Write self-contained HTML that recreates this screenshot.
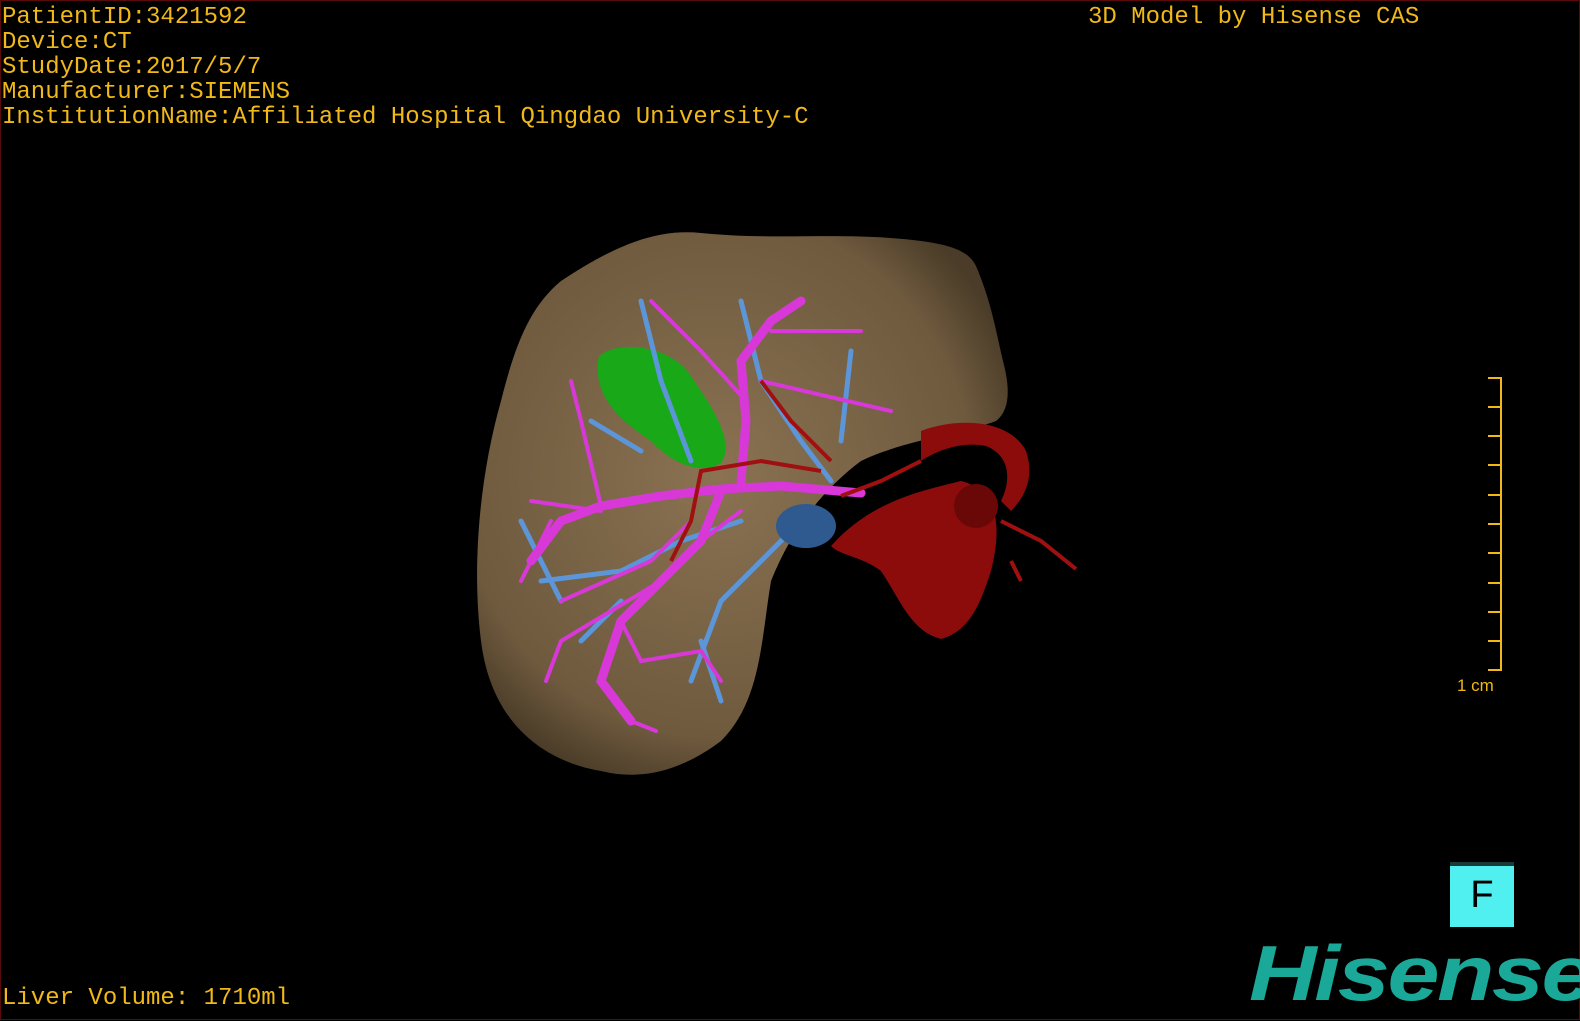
<!DOCTYPE html>
<html><head><meta charset="utf-8"><style>
html,body{margin:0;padding:0;background:#000;}
body{width:1580px;height:1020px;position:relative;overflow:hidden;border:1px solid #5a0a0a;box-sizing:border-box;}
.t{position:absolute;color:#f0b818;font-family:"Liberation Mono",monospace;font-size:24px;line-height:25px;white-space:pre;letter-spacing:0px;}
</style></head><body>
<div class="t" style="left:1px;top:4px">PatientID:3421592
Device:CT
StudyDate:2017/5/7
Manufacturer:SIEMENS
InstitutionName:Affiliated Hospital Qingdao University-C</div>
<div class="t" style="left:1087px;top:4px">3D Model by Hisense CAS</div>
<div class="t" style="left:1px;top:985px">Liver Volume: 1710ml</div>
<svg width="1580" height="1020" style="position:absolute;left:0;top:0">
<defs><radialGradient id="lv" cx="0.45" cy="0.45" r="0.6"><stop offset="0" stop-color="#8a7252"/><stop offset="0.8" stop-color="#6f5a3e"/><stop offset="1" stop-color="#4a3c28"/></radialGradient></defs>
<path d="M560,280 C620,240 660,228 700,232 C780,240 840,230 920,240 C960,245 970,255 975,265 C990,300 995,330 1002,360 C1010,390 1008,410 995,420 C970,430 900,440 860,460 C820,490 790,530 770,580 C760,640 760,700 720,740 C680,770 640,780 600,770 C540,760 490,720 480,640 C470,560 480,470 500,400 C515,340 530,305 560,280 Z" fill="url(#lv)"/>
<path d="M598,355 C620,338 670,345 690,375 C710,405 735,440 720,462 C700,475 670,462 650,440 C620,420 590,395 598,355 Z" fill="#18a818"/>
<g stroke="#5c95d8" stroke-width="5" fill="none" stroke-linecap="round">
<path d="M790,530 L760,560 L720,600 L690,680 M740,300 L760,380 L800,440 L830,480 M640,300 L660,380 L690,460 M540,580 L620,570 L680,540 L740,520 M580,640 L620,600 M700,640 L720,700 M850,350 L840,440 M590,420 L640,450 M520,520 L560,600"/>
</g>
<ellipse cx="805" cy="525" rx="30" ry="22" fill="#2e5a90"/>
<g stroke="#d838d8" stroke-width="9" fill="none" stroke-linecap="round">
<path d="M860,492 L780,485 L720,488 L660,495 L600,505 L560,520 L530,560"/>
<path d="M720,490 L700,540 L660,580 L620,620 L600,680 L630,720"/>
<path d="M740,480 L745,420 L740,360 L770,320 L800,300"/>
</g>
<g stroke="#d838d8" stroke-width="4" fill="none" stroke-linecap="round">
<path d="M745,400 L700,350 L650,300 M770,330 L860,330 M760,380 L890,410 M600,505 L580,420 L570,380 M660,580 L560,640 L545,680 M620,620 L640,660 L700,650 L720,680 M690,520 L650,560 L560,600 M600,510 L530,500 M700,540 L740,510 M630,720 L655,730 M550,520 L520,580"/>
</g>
<g fill="#8c0c0c">
<path d="M830,545 C870,500 920,490 960,480 C1000,490 1000,530 990,570 C980,600 970,630 940,638 C910,630 900,600 880,570 C860,555 840,555 830,545 Z"/>
<circle cx="975" cy="505" r="22" fill="#6a0808"/>
<path d="M920,430 C960,415 1010,420 1025,450 C1035,480 1020,500 1010,510 L1000,500 C1010,480 1010,455 985,445 C960,440 935,450 920,460 Z"/>
</g>
<g stroke="#a01010" stroke-width="4" fill="none">
<path d="M840,495 L880,480 L920,460 M830,460 L790,420 L760,380 M820,470 L760,460 L700,470 L690,520 L670,560 M1000,520 L1040,540 L1075,568 M1010,560 L1020,580"/>
</g>
<g stroke="#f0b818" stroke-width="2" fill="none">
<path d="M1487,377 H1500 V669 H1487 M1487,406 H1500 M1487,435 H1500 M1487,464 H1500 M1487,494 H1500 M1487,523 H1500 M1487,552 H1500 M1487,582 H1500 M1487,611 H1500 M1487,640 H1500"/>
</g>
<text x="1456" y="690" fill="#f0b818" font-family="Liberation Sans,sans-serif" font-size="17">1 cm</text>
</svg>
<div style="position:absolute;left:1449px;top:861px;width:64px;height:65px;background:#50f0f0;border-top:4px solid #1a3a3a;box-sizing:border-box;color:#000;font:38px 'Liberation Sans',sans-serif;text-align:center;line-height:58px;">F</div>
<div style="position:absolute;left:1248px;top:932px;color:#1aa898;font:italic bold 78px 'Liberation Sans',sans-serif;letter-spacing:-2px;line-height:80px;transform:scaleX(1.2);transform-origin:0 0;">Hisense</div>
</body></html>
